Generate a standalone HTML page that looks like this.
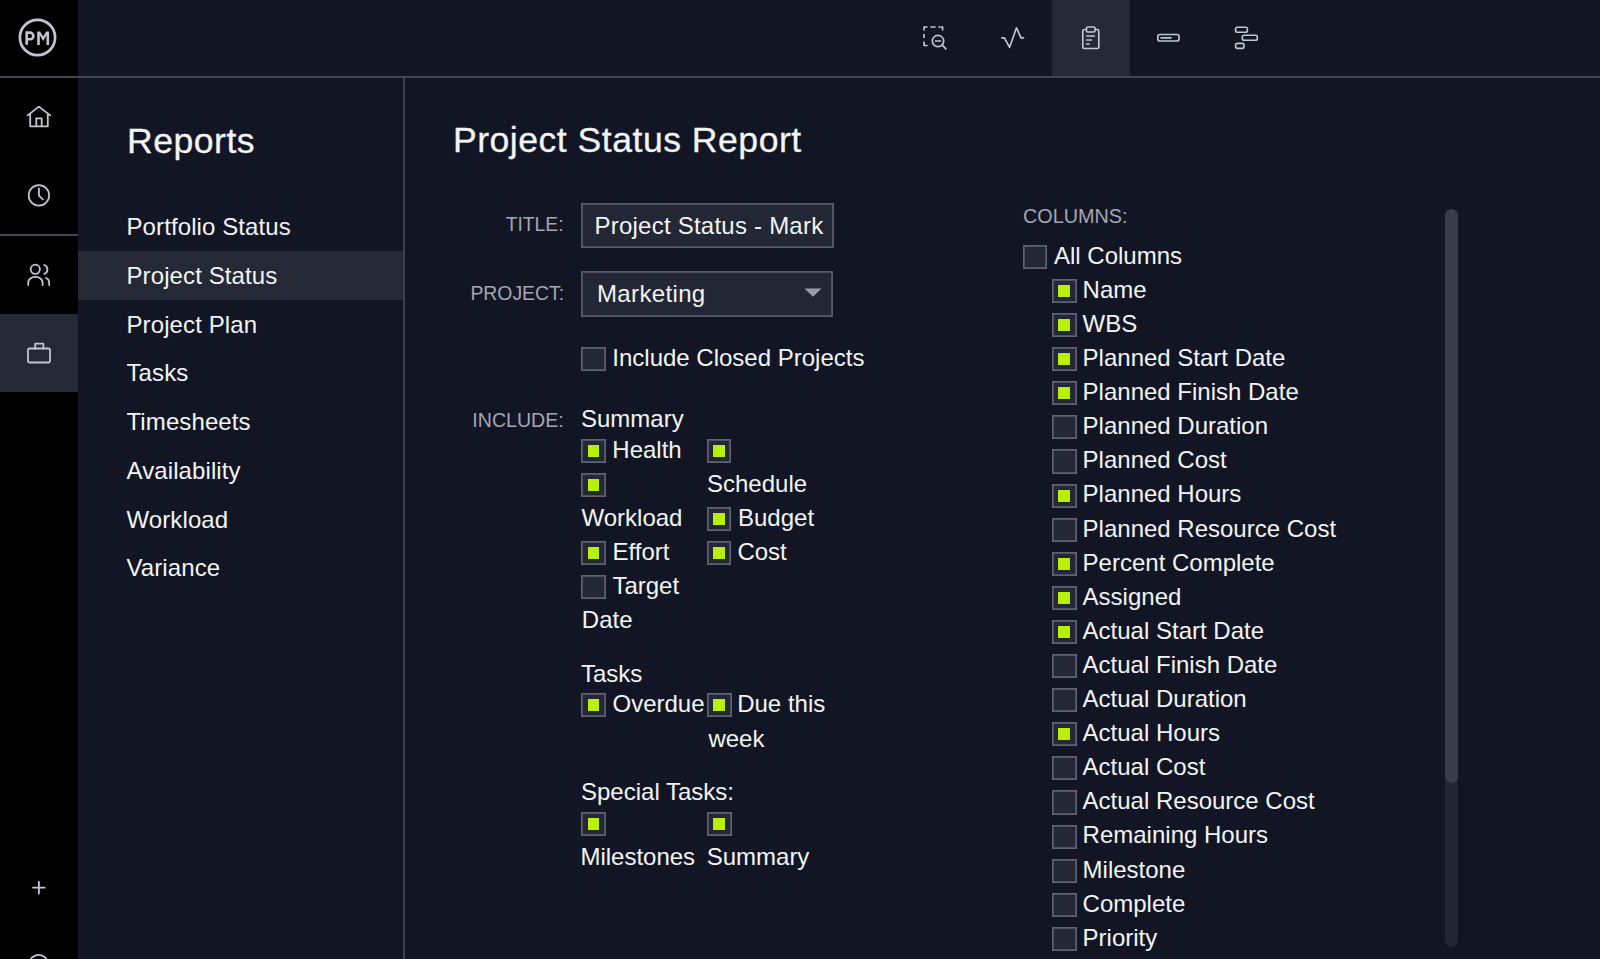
<!DOCTYPE html>
<html><head><meta charset="utf-8">
<style>
*{margin:0;padding:0;box-sizing:border-box}
html,body{width:1600px;height:959px;overflow:hidden;background:#121624;font-family:"Liberation Sans",sans-serif;color:#f3f4f6}
.abs{position:absolute}
.t{position:absolute;white-space:nowrap;line-height:1}
.rail{position:absolute;left:0;top:0;width:78px;height:959px;background:#000}
.hl{position:absolute;background:#252835}
.hline{position:absolute;height:2px;background:#424556}
.vline{position:absolute;width:2px;background:#3c3f4f}
.menu{font-size:24px;letter-spacing:0.1px;color:#f3f4f6}
.lbl{font-size:20.5px;letter-spacing:0px;color:#a4a7b2}
.body{font-size:24px;letter-spacing:0px;color:#f3f4f6}
.cb{position:absolute;width:24.4px;height:24.2px;box-shadow:inset 0 0 0 1.7px #5d6171;background:#242735}
.cb.on::after{content:"";position:absolute;left:6.3px;top:6.2px;width:11.8px;height:12px;background:#b8f006}
.inp{position:absolute;box-shadow:inset 0 0 0 1.8px #575b6c;background:#232634}
svg{position:absolute;overflow:visible}
</style></head><body>
<div class="rail"></div>
<div class="hl" style="left:0;top:313.5px;width:78px;height:78px"></div>
<div class="hline" style="left:0;top:76px;width:1600px"></div>
<div class="hline" style="left:0;top:234px;width:78px"></div>
<div class="hl" style="left:1052px;top:0;width:77.5px;height:76px"></div>
<div class="vline" style="left:402.5px;top:78px;height:881px"></div>
<div class="hl" style="left:78px;top:251.3px;width:324.5px;height:48.7px"></div>
<svg style="left:0;top:0" width="78" height="78" viewBox="0 0 78 78">
  <circle cx="37.5" cy="37.5" r="17.6" fill="none" stroke="#c3c6cf" stroke-width="2.7"/>
  <path d="M26.7 44.8 V32.65 H30.05 A3.3 3.3 0 0 1 30.05 39.25 H26.7" fill="none" stroke="#c3c6cf" stroke-width="2.6"/>
  <path d="M37.2 44.9 V31.4 H40.1 L43.15 36.4 L46.2 31.4 H49.1 V44.9 H46.5 V35.2 L43.15 41.1 L39.8 35.2 V44.9 Z" fill="#c3c6cf"/>
</svg>
<svg style="left:0;top:0" width="78" height="959" viewBox="0 0 78 959" fill="none" stroke="#c3c6cf" stroke-width="1.8" stroke-linecap="round" stroke-linejoin="round">
  <path d="M27.6 115.4 L38.9 106.6 L50.3 115.4 M30.2 113.6 V126.3 H47.8 V113.6 M36.3 126.3 V118.3 H41.7 V126.3"/>
  <circle cx="38.9" cy="195.4" r="10.2" stroke-width="1.7"/>
  <path d="M38.9 188.3 V195.6 L42.8 199.3"/>
  <circle cx="35.3" cy="269.3" r="4.6"/>
  <path d="M28.2 285 V282.5 A7 5.5 0 0 1 42.6 282.5 V285"/>
  <path d="M44.2 265 A4.6 4.6 0 0 1 44.2 273.8"/>
  <path d="M46 278 A4 5 0 0 1 49.2 282.5 V285"/>
  <rect x="28" y="348.5" width="22" height="14" rx="1.5"/>
  <path d="M35.2 348.5 V343.6 H43.4 V348.5"/>
  <path d="M33 887.6 H44.8 M38.9 881.7 V893.6"/>
  <circle cx="38.6" cy="964.3" r="9.5"/>
</svg>
<svg style="left:0;top:0" width="1600" height="78" viewBox="0 0 1600 78" fill="none" stroke="#c3c6cf" stroke-width="1.65" stroke-linecap="round" stroke-linejoin="round">
  <path d="M924 30 V27 H927 M931 27 H935 M939 27 H942.6 V30 M924 34.5 V37.5 M924 42 V45.5 H927"/>
  <circle cx="938" cy="41" r="5.7"/>
  <path d="M935.4 41 H940.6 M942.2 45.2 L945.9 48.9"/>
  <path d="M1001.8 37.8 H1004.4 L1009.6 47.3 L1016.5 27.8 L1021 37.8 H1023.6"/>
  <path d="M1086.3 29.5 H1084.3 Q1082.8 29.5 1082.8 31 V47 Q1082.8 48.5 1084.3 48.5 H1097.3 Q1098.8 48.5 1098.8 47 V31 Q1098.8 29.5 1097.3 29.5 H1095.2"/>
  <rect x="1086.4" y="27" width="8.7" height="5" rx="1.5"/>
  <path d="M1086.6 36 H1094.4 M1086.6 40 H1091.4 M1086.6 44 H1089.2"/>
  <rect x="1157.8" y="34.5" width="21.2" height="6.5" rx="2"/>
  <path d="M1161 37.8 H1171"/>
  <rect x="1235.6" y="27.2" width="11.8" height="5" rx="1.8"/>
  <rect x="1242.3" y="35.2" width="15" height="5" rx="1.8"/>
  <rect x="1235.6" y="43.4" width="8.4" height="5" rx="1.8"/>
</svg>
<div class="t" style="left:127px;top:123.74px;font-size:35.6px;letter-spacing:0.5px;-webkit-text-stroke:0.3px #f3f4f6">Reports</div>
<div class="t menu" style="left:126.5px;top:215.1px">Portfolio Status</div>
<div class="t menu" style="left:126.5px;top:263.85px">Project Status</div>
<div class="t menu" style="left:126.5px;top:312.6px">Project Plan</div>
<div class="t menu" style="left:126.5px;top:361.35px">Tasks</div>
<div class="t menu" style="left:126.5px;top:410.1px">Timesheets</div>
<div class="t menu" style="left:126.5px;top:458.85px">Availability</div>
<div class="t menu" style="left:126.5px;top:507.6px">Workload</div>
<div class="t menu" style="left:126.5px;top:556.35px">Variance</div>
<div class="t" style="left:453px;top:123.34px;font-size:35.6px;letter-spacing:0.5px;-webkit-text-stroke:0.3px #f3f4f6">Project Status Report</div>
<div class="t lbl" style="right:1036px;top:214.27px;transform:scaleX(0.94);transform-origin:100% 50%">TITLE:</div>
<div class="inp" style="left:581.2px;top:203px;width:253px;height:45px"></div>
<div class="t body" style="left:594.5px;top:214.1px;letter-spacing:0.23px">Project Status - Mark</div>
<div class="t lbl" style="right:1036px;top:282.57px;transform:scaleX(0.945);transform-origin:100% 50%">PROJECT:</div>
<div class="inp" style="left:581.2px;top:271.2px;width:252px;height:46.3px"></div>
<div class="t body" style="left:597px;top:281.8px;letter-spacing:0.35px">Marketing</div>
<svg style="left:804px;top:287.5px" width="18" height="9" viewBox="0 0 18 9"><path d="M0.5 0.5 H17.5 L9 8.8 Z" fill="#9a9eab"/></svg>
<div class="cb" style="left:581.3px;top:346.8px"></div>
<div class="t body" style="left:612.3px;top:345.9px">Include Closed Projects</div>
<div class="t lbl" style="right:1036px;top:410.18px;transform:scaleX(0.955);transform-origin:100% 50%">INCLUDE:</div>
<div class="t body" style="left:581px;top:406.9px">Summary</div>
<div class="cb on" style="left:581.3px;top:438.8px"></div>
<div class="t body" style="left:612.3px;top:437.9px">Health</div>
<div class="cb on" style="left:707px;top:438.8px"></div>
<div class="cb on" style="left:581.3px;top:473.1px"></div>
<div class="t body" style="left:707px;top:472.1px">Schedule</div>
<div class="t body" style="left:581.5px;top:505.6px">Workload</div>
<div class="cb on" style="left:707px;top:507.3px"></div>
<div class="t body" style="left:738px;top:505.6px">Budget</div>
<div class="cb on" style="left:581.3px;top:541.3px"></div>
<div class="t body" style="left:612.5px;top:540.4px">Effort</div>
<div class="cb on" style="left:707px;top:541.3px"></div>
<div class="t body" style="left:737.4px;top:540.1px">Cost</div>
<div class="cb" style="left:581.3px;top:574.8px"></div>
<div class="t body" style="left:612.4px;top:573.6px">Target</div>
<div class="t body" style="left:581.8px;top:608.1px">Date</div>
<div class="t body" style="left:581px;top:661.6px">Tasks</div>
<div class="cb on" style="left:581.3px;top:693.2px"></div>
<div class="t body" style="left:612.5px;top:691.5px">Overdue</div>
<div class="cb on" style="left:707.2px;top:693.2px"></div>
<div class="t body" style="left:737.2px;top:691.5px">Due this</div>
<div class="t body" style="left:708.4px;top:726.5px">week</div>
<div class="t body" style="left:581px;top:779.9px">Special Tasks:</div>
<div class="cb on" style="left:581.3px;top:811.9px"></div>
<div class="cb on" style="left:707.2px;top:811.9px"></div>
<div class="t body" style="left:580.4px;top:845.1px">Milestones</div>
<div class="t body" style="left:706.7px;top:845.3px">Summary</div>
<div class="t lbl" style="left:1022.95px;top:206.07px;transform:scaleX(0.965);transform-origin:0 50%">COLUMNS:</div>
<div class="cb" style="left:1023.1px;top:245.3px"></div>
<div class="t body" style="left:1054px;top:243.7px">All Columns</div>
<div class="cb on" style="left:1052.2px;top:278.9px"></div>
<div class="t body" style="left:1082.6px;top:277.8px">Name</div>
<div class="cb on" style="left:1052.2px;top:313px"></div>
<div class="t body" style="left:1082.6px;top:311.9px">WBS</div>
<div class="cb on" style="left:1052.2px;top:347.1px"></div>
<div class="t body" style="left:1082.6px;top:346px">Planned Start Date</div>
<div class="cb on" style="left:1052.2px;top:381.2px"></div>
<div class="t body" style="left:1082.6px;top:380.1px">Planned Finish Date</div>
<div class="cb" style="left:1052.2px;top:415.3px"></div>
<div class="t body" style="left:1082.6px;top:414.2px">Planned Duration</div>
<div class="cb" style="left:1052.2px;top:449.4px"></div>
<div class="t body" style="left:1082.6px;top:448.3px">Planned Cost</div>
<div class="cb on" style="left:1052.2px;top:483.5px"></div>
<div class="t body" style="left:1082.6px;top:482.4px">Planned Hours</div>
<div class="cb" style="left:1052.2px;top:517.6px"></div>
<div class="t body" style="left:1082.6px;top:516.5px">Planned Resource Cost</div>
<div class="cb on" style="left:1052.2px;top:551.7px"></div>
<div class="t body" style="left:1082.6px;top:550.6px">Percent Complete</div>
<div class="cb on" style="left:1052.2px;top:585.8px"></div>
<div class="t body" style="left:1082.6px;top:584.7px">Assigned</div>
<div class="cb on" style="left:1052.2px;top:619.9px"></div>
<div class="t body" style="left:1082.6px;top:618.8px">Actual Start Date</div>
<div class="cb" style="left:1052.2px;top:654px"></div>
<div class="t body" style="left:1082.6px;top:652.9px">Actual Finish Date</div>
<div class="cb" style="left:1052.2px;top:688.1px"></div>
<div class="t body" style="left:1082.6px;top:687px">Actual Duration</div>
<div class="cb on" style="left:1052.2px;top:722.2px"></div>
<div class="t body" style="left:1082.6px;top:721.1px">Actual Hours</div>
<div class="cb" style="left:1052.2px;top:756.3px"></div>
<div class="t body" style="left:1082.6px;top:755.2px">Actual Cost</div>
<div class="cb" style="left:1052.2px;top:790.4px"></div>
<div class="t body" style="left:1082.6px;top:789.3px">Actual Resource Cost</div>
<div class="cb" style="left:1052.2px;top:824.5px"></div>
<div class="t body" style="left:1082.6px;top:823.4px">Remaining Hours</div>
<div class="cb" style="left:1052.2px;top:858.6px"></div>
<div class="t body" style="left:1082.6px;top:857.5px">Milestone</div>
<div class="cb" style="left:1052.2px;top:892.7px"></div>
<div class="t body" style="left:1082.6px;top:891.6px">Complete</div>
<div class="cb" style="left:1052.2px;top:926.8px"></div>
<div class="t body" style="left:1082.6px;top:925.7px">Priority</div>
<div class="abs" style="left:1445px;top:209px;width:13px;height:738px;border-radius:6.5px;background:#222533"></div>
<div class="abs" style="left:1445px;top:209px;width:13px;height:573.5px;border-radius:6.5px;background:#393c49"></div>
</body></html>
